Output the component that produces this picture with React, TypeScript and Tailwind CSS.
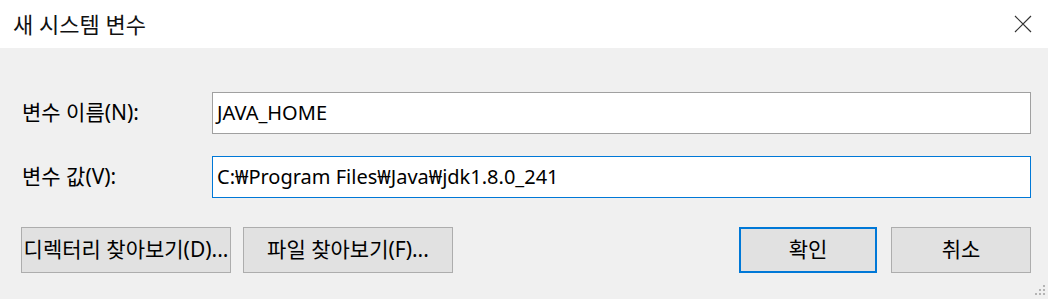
const font = { fontFamily: '"Noto Sans", "Noto Sans CJK KR", sans-serif' };

const Button = ({ label, w, primary }: { label: string; w: string; primary?: boolean }) => (
  <div
    className={`${w} h-[46px] flex items-center justify-center bg-[#e1e1e1] text-[21px] text-black whitespace-nowrap ${
      primary ? "border-2 border-[#0078d7]" : "border border-[#adadad]"
    }`}
  >
    {label}
  </div>
);

const Field = ({ label, value, focused }: { label: string; value: string; focused?: boolean }) => (
  <div className="flex items-center">
    <div className="w-[190px] text-[21px] text-black">{label}</div>
    <div
      className={`flex-1 h-[42px] flex items-center pl-[4px] bg-white text-[20px] text-black border ${
        focused ? "border-[#0078d7]" : "border-[#a0a0a0]"
      }`}
    >
      {value}
    </div>
  </div>
);

export default function App() {
  return (
    <div className="w-[1048px] h-[299px] flex flex-col bg-white overflow-hidden" style={font}>
      {/* title bar */}
      <div className="h-[48px] flex items-center justify-between pl-[13px] pr-[16px] bg-white">
        <span className="text-[22px] text-[#111]">새 시스템 변수</span>
        <svg width="18" height="18" viewBox="0 0 18 18">
          <path d="M1 1L17 17M17 1L1 17" stroke="#333" strokeWidth="1.2" fill="none" />
        </svg>
      </div>

      {/* body */}
      <div className="relative flex-1 bg-[#f0f0f0] pt-[44px] pl-[22px] pr-[17px]">
        <div className="flex flex-col gap-[22px]">
          <Field label="변수 이름(N):" value="JAVA_HOME" />
          <Field label="변수 값(V):" value="C:₩Program Files₩Java₩jdk1.8.0_241" focused />
        </div>

        <div className="flex items-center mt-[29px] -ml-[1px]">
          <div className="flex gap-[12px]">
            <Button label="디렉터리 찾아보기(D)..." w="w-[210px]" />
            <Button label="파일 찾아보기(F)..." w="w-[210px]" />
          </div>
          <div className="flex gap-[14px] ml-auto">
            <Button label="확인" w="w-[138px]" primary />
            <Button label="취소" w="w-[140px]" />
          </div>
        </div>

        {/* resize grip */}
        <svg className="absolute right-[2px] bottom-[3px]" width="11" height="11" viewBox="0 0 11 11">
          <rect x="8" y="0" width="2" height="2" fill="#b4b4b4" />
          <rect x="4" y="4" width="2" height="2" fill="#b4b4b4" />
          <rect x="8" y="4" width="2" height="2" fill="#b4b4b4" />
          <rect x="0" y="8" width="2" height="2" fill="#b4b4b4" />
          <rect x="4" y="8" width="2" height="2" fill="#b4b4b4" />
          <rect x="8" y="8" width="2" height="2" fill="#b4b4b4" />
        </svg>
      </div>
    </div>
  );
}
